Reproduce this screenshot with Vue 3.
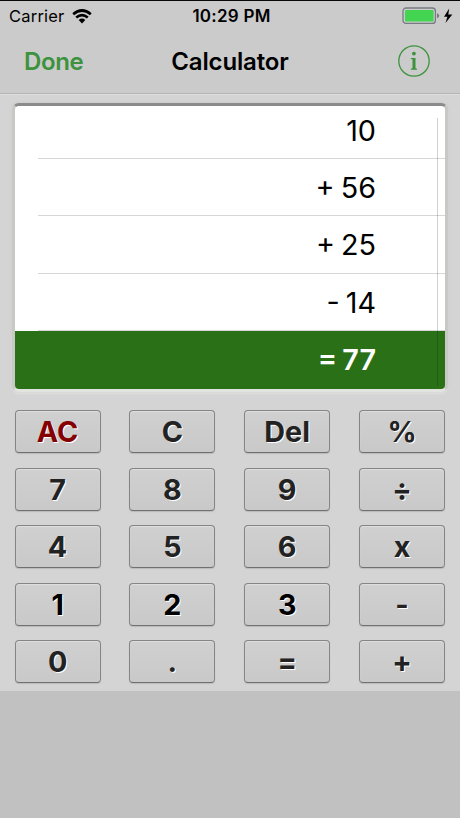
<template>
  <div class="page">
    <header class="header">
      <div class="status-bar">
        <div class="status-left">
          <span class="carrier">Carrier</span>
          <svg class="wifi" width="20" height="15" viewBox="0 0 20 15">
            <path d="M1.2 5.2Q10-2.2 18.8 5.2" />
            <path d="M4.2 8.5Q10 3.9 15.8 8.5" />
            <path class="wifi-dot" d="M6.7 11Q10 8.2 13.3 11L10 14.4Z" />
          </svg>
        </div>
        <span class="time">10:29 PM</span>
        <div class="status-right">
          <svg width="52" height="18" viewBox="0 0 52 18">
            <rect class="battery-case" x="1" y="1" width="32.4" height="15.4" rx="3" />
            <rect class="battery-level" x="3" y="3" width="28.6" height="11.4" rx="1" />
            <path class="battery-cap" d="M35 6.2Q37.2 7 37.2 8.7T35 11.2Z" />
            <path d="M47.2 1.5L42 9.8H45.4L43.5 16L50.3 7.5H46.3Z" />
          </svg>
        </div>
      </div>
      <div class="nav-bar">
        <span class="done">Done</span>
        <span class="title">Calculator</span>
        <svg class="info" width="32" height="32" viewBox="0 0 32 32">
          <circle class="info-ring" cx="16" cy="16" r="15.2" />
          <circle cx="15.9" cy="8.6" r="1.9" />
          <path d="M12.8 13H17.5V23.3L19 23.8V24.7H12.8V23.8L14.5 23.3V14.3L12.8 14Z" />
        </svg>
      </div>
    </header>
    <main class="calculator">
      <div class="display">
        <div v-for="(line, i) in tape" :key="i" class="line">{{ line }}</div>
        <div class="line total">= {{ total }}</div>
        <div class="scroll-line"></div>
      </div>
      <div class="keypad">
        <button v-for="key in keys" :key="key" class="key" :class="{ clear: key === 'AC', dark: ['1', '2', '3'].includes(key) }">
          {{ key }}
        </button>
      </div>
    </main>
  </div>
</template>

<script setup>
import { ref } from 'vue'

const tape = ref(['10', '+ 56', '+ 25', '- 14'])
const total = ref(77)
const keys = [
  'AC', 'C', 'Del', '%',
  '7', '8', '9', '÷',
  '4', '5', '6', 'x',
  '1', '2', '3', '-',
  '0', '.', '=', '+',
]
</script>

<style>
body {
  background: #c1c1c1;
}
</style>

<style scoped>
.page {
  height: 818px;
  overflow: hidden;
  box-sizing: border-box;
  border-top: 1px solid #080808;
  background: #c1c1c1;
  font-family: Inter, "Liberation Sans", sans-serif;
  color: #000;
}

.header {
  height: 93px;
  box-sizing: border-box;
  background: #cbcbcb;
  border-bottom: 1px solid #b5b5b5;
}

.status-bar {
  height: 30px;
  display: grid;
  grid-template-columns: 1fr auto 1fr;
  align-items: center;
  padding: 0 6px 0 9px;
  font-size: 16.5px;
  line-height: 30px;
}

.status-left {
  display: flex;
  align-items: center;
  gap: 8px;
}

.carrier {
  letter-spacing: 0.2px;
}

.wifi {
  fill: none;
  stroke: #000;
  stroke-width: 2.7;
}

.wifi-dot {
  fill: #000;
  stroke: none;
}

.time {
  font-weight: 600;
  font-size: 17px;
  letter-spacing: 0.25px;
}

.status-right {
  display: flex;
  justify-content: flex-end;
}

.battery-case {
  fill: none;
  stroke: #777b80;
  stroke-width: 1.3;
}

.battery-level {
  fill: #43d552;
}

.battery-cap {
  fill: #777b80;
}

.nav-bar {
  height: 62px;
  display: grid;
  grid-template-columns: 1fr auto 1fr;
  align-items: center;
  padding: 0 30px 2px 24px;
  box-sizing: border-box;
  font-size: 24px;
  font-weight: 600;
}

.title {
  margin-left: 6px;
  letter-spacing: -0.15px;
}

.done {
  color: #3d923d;
  letter-spacing: -0.4px;
}

.info {
  justify-self: end;
  fill: #3d923d;
}

.info-ring {
  fill: none;
  stroke: #3d923d;
  stroke-width: 1.3;
}

.calculator {
  height: 597px;
  box-sizing: border-box;
  padding: 8px 12px 0;
  background: #d4d4d4;
  border-top: 1px solid #dedede;
}

.display {
  position: relative;
  height: 289px;
  box-sizing: border-box;
  overflow: hidden;
  border: 3px solid #c8c8c5;
  border-top: 3px solid #8b8b8b;
  border-bottom-color: #e2e4df;
  border-radius: 7px;
  background: #fff;
  box-shadow: 0 0 3px #c5c5c5, 0 2px 2px #e4e4e2;
}

.line {
  height: 57.5px;
  box-sizing: border-box;
  margin-left: 23px;
  padding-right: 69px;
  border-bottom: 1px solid #d6d6d6;
  font-size: 28.75px;
  line-height: 57.4px;
  text-align: right;
  word-spacing: -2px;
}

.line:first-child {
  height: 52.9px;
  line-height: 50px;
}

.line.total {
  height: 58px;
  margin-left: 0;
  border: 0;
  background: #2a7016;
  color: #fff;
  font-weight: 600;
  line-height: 58px;
}

.scroll-line {
  position: absolute;
  top: 12px;
  right: 7px;
  bottom: 3px;
  width: 1px;
  background: rgba(0, 0, 0, 0.18);
}

.keypad {
  display: grid;
  grid-template-columns: repeat(4, 86px);
  grid-auto-rows: 43px;
  justify-content: space-between;
  row-gap: 14.5px;
  padding: 18px 3px 0 2.6px;
}

.key {
  padding: 0;
  border: 1px solid #858585;
  border-bottom-color: #707070;
  border-radius: 4px;
  background: linear-gradient(#d0d0d0, #c9c9c9);
  box-shadow: inset 0 1px 1px #dedede, 0 1px 1px #bababa;
  color: #222;
  font-family: inherit;
  font-size: 28.75px;
  font-weight: 700;
  line-height: 41px;
  text-shadow: 1px 1px 0 #fff;
}

.clear {
  color: #850000;
}

.dark {
  color: #000;
}
</style>
